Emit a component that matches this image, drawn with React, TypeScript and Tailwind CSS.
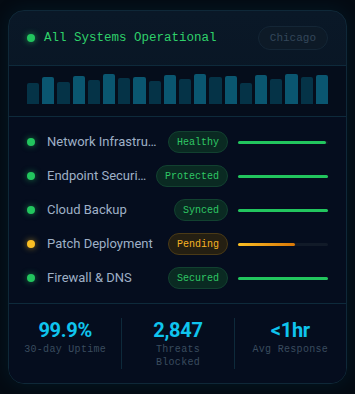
import React from "react";

type Service = {
  name: string;
  status: string;
  tone: "ok" | "warn";
  progress: number;
};

const bars = [21, 27, 22, 28, 24, 30, 26, 27, 23, 29, 25, 30, 27, 28, 21, 29, 25, 30, 27, 29];

const services: Service[] = [
  { name: "Network Infrastructure", status: "Healthy", tone: "ok", progress: 98 },
  { name: "Endpoint Security", status: "Protected", tone: "ok", progress: 100 },
  { name: "Cloud Backup", status: "Synced", tone: "ok", progress: 100 },
  { name: "Patch Deployment", status: "Pending", tone: "warn", progress: 63 },
  { name: "Firewall & DNS", status: "Secured", tone: "ok", progress: 100 },
];

const stats = [
  { value: "99.9%", label: "30-day Uptime" },
  { value: "2,847", label: "Threats Blocked" },
  { value: "<1hr", label: "Avg Response" },
];

const mono = "font-['Liberation_Mono','DejaVu_Sans_Mono',monospace]";

export default function App() {
  return (
    <div className="min-h-[394px] w-full bg-[#040b13] pt-[10px] pb-[11px] px-[8px]">
      <div className="rounded-[16px] border border-[#0f2838] bg-gradient-to-b from-[#0a1827] to-[#060f1d] shadow-[0_0_18px_rgba(8,80,110,0.18)] overflow-hidden">
        {/* status header */}
        <div className="flex items-center justify-between px-[18px] py-[15px] border-b border-[#0e2a3b]">
          <div className="flex items-center gap-[9px]">
            <span className="w-[8px] h-[8px] rounded-full bg-[#22c55e] shadow-[0_0_6px_rgba(34,197,94,0.7)]" />
            <span className={`${mono} text-[12.5px] text-[#2fd06a]`}>All Systems Operational</span>
          </div>
          <span
            className={`${mono} text-[11px] leading-none text-[#34475a] bg-[#0d1a27] border border-[#142636] rounded-full h-[24px] flex items-center px-[11px]`}
          >
            Chicago
          </span>
        </div>

        {/* activity bars */}
        <div className="px-[18px] pt-[8px] pb-[12px] border-b border-[#0e2a3b] bg-[#050d1b]">
          <div className="flex items-end gap-[3px] h-[30px]">
            {bars.map((h, i) => (
              <div
                key={i}
                className={`flex-1 rounded-t-[2px] ${i % 2 === 1 ? "bg-[#0a5670]" : "bg-[#053347]"}`}
                style={{ height: h }}
              />
            ))}
          </div>
        </div>

        {/* services */}
        <div className="px-[18px] pt-[14px] pb-[14px] flex flex-col gap-[12px] border-b border-[#0e2a3b] bg-[#050d1e]">
          {services.map((s) => {
            const ok = s.tone === "ok";
            return (
              <div key={s.name} className="flex items-center h-[22px]">
                <span
                  className={`shrink-0 w-[8px] h-[8px] rounded-full ${
                    ok
                      ? "bg-[#22c55e] shadow-[0_0_6px_rgba(34,197,94,0.6)]"
                      : "bg-[#fbbf24] shadow-[0_0_6px_rgba(251,191,36,0.6)]"
                  }`}
                />
                <span className="ml-[12px] flex-1 min-w-0 truncate font-['Roboto',sans-serif] text-[13px] text-[#9fb0c6]">
                  {s.name}
                </span>
                <span
                  className={`${mono} ml-[9px] shrink-0 h-[22px] flex items-center rounded-full px-[8px] text-[10px] border ${
                    ok
                      ? "bg-[#0a2a22] border-[#124130] text-[#2fc765]"
                      : "bg-[#241f12] border-[#4a3a16] text-[#f5b324]"
                  }`}
                >
                  {s.status}
                </span>
                <div className="ml-[10px] shrink-0 w-[90px] h-[3px] rounded-full bg-[#111a28]">
                  <div
                    className={`h-full rounded-full ${
                      ok ? "bg-[#22c55e]" : "bg-gradient-to-r from-[#fbbf24] to-[#d97706]"
                    }`}
                    style={{ width: `${s.progress}%` }}
                  />
                </div>
              </div>
            );
          })}
        </div>

        {/* stats */}
        <div className="grid grid-cols-3 pt-[14px] pb-[14px] bg-[#050d1e]">
          {stats.map((st, i) => (
            <div
              key={st.label}
              className={`flex flex-col items-center px-3 text-center ${i > 0 ? "border-l border-[#0e2a3b]" : ""}`}
            >
              <span className="font-['Roboto',sans-serif] font-bold text-[20px] leading-[24px] tracking-[-0.3px] text-[#0fc4ee]">
                {st.value}
              </span>
              <span className={`${mono} mt-[1px] text-[10px] leading-[13px] tracking-[0.3px] text-[#3a4c5f]`}>
                {st.label}
              </span>
            </div>
          ))}
        </div>
      </div>
    </div>
  );
}
